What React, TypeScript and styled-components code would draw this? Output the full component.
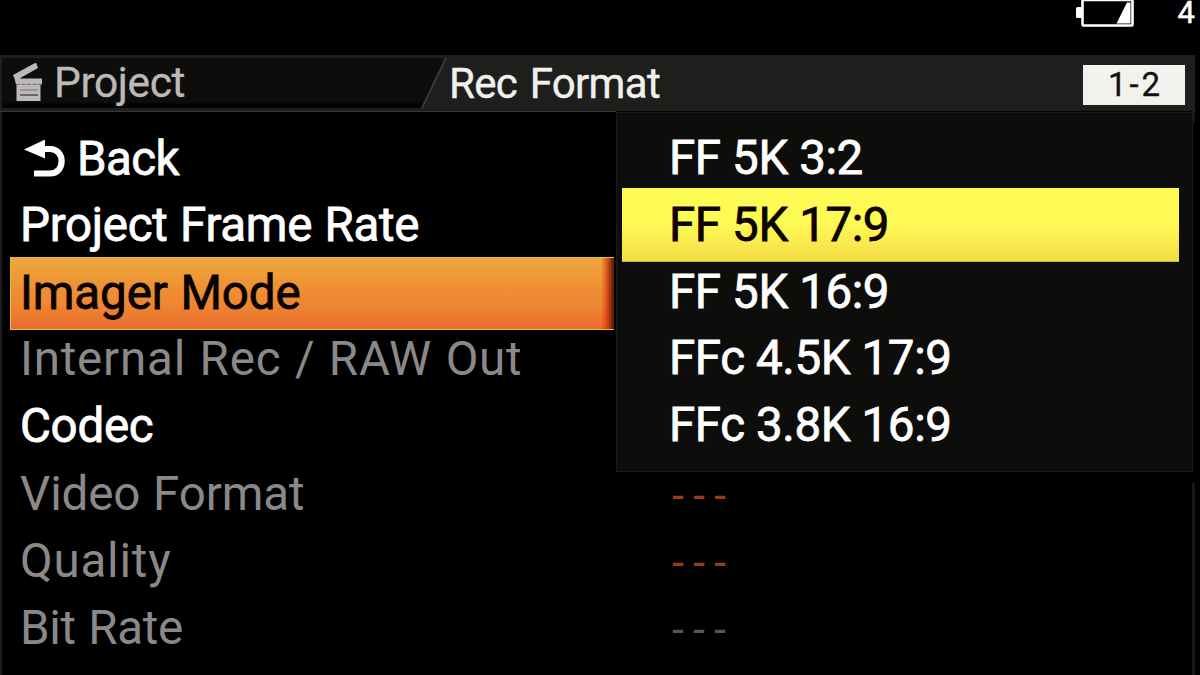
import React from 'react';
import styled, { createGlobalStyle, css } from 'styled-components';

const GlobalStyle = createGlobalStyle`
  * {
    box-sizing: border-box;
  }
  body {
    margin: 0;
    background: #000;
    overflow: hidden;
  }
`;

const Screen = styled.div`
  position: relative;
  display: flex;
  flex-direction: column;
  width: 1200px;
  height: 675px;
  overflow: hidden;
  background: #000;
  color: #fff;
  font-family: Roboto, 'Liberation Sans', sans-serif;
  white-space: nowrap;
`;

const StatusBar = styled.div`
  display: flex;
  justify-content: flex-end;
  height: 55px;
  padding-right: 5px;
`;

const BatteryIcon = styled.svg`
  width: 60px;
  height: 28px;
  margin: 0 43px 0 0;
`;

const Remaining = styled.span`
  font-size: 31px;
  line-height: 26px;
  -webkit-text-stroke: 0.5px currentColor;
`;

const Header = styled.header`
  display: flex;
  align-items: flex-start;
  width: 1195px;
  height: 57px;
  padding: 3px 10px 0 2px;
  background: #1e1e1d;
  border-bottom: 1px solid #363634;
`;

const TabEdge = styled.div`
  width: 445px;
  height: 50px;
  padding-right: 2px;
  background: #3c3c3a;
  clip-path: polygon(0 0, 100% 0, calc(100% - 24px) 100%, 0 100%);
`;

const Tab = styled.div`
  display: flex;
  align-items: center;
  height: 50px;
  padding-left: 10px;
  background: linear-gradient(#0d0d0b 44px, #030303 46px);
  clip-path: polygon(0 0, 100% 0, calc(100% - 24px) 100%, 0 100%);
  color: #bcb9b8;
`;

const TabLabel = styled.span`
  padding: 0 0 0 12px;
  font-size: 42.5px;
  line-height: 48px;
  letter-spacing: -0.4px;
  -webkit-text-stroke: 0.3px currentColor;
`;

const Title = styled.h1`
  flex: 1;
  margin: 0;
  padding-left: 2px;
  font-size: 42px;
  font-weight: 400;
  line-height: 52px;
  letter-spacing: -0.7px;
  word-spacing: 3px;
  color: #f0f0ee;
  -webkit-text-stroke: 0.4px #f0f0ee;
`;

const PageNumber = styled.div`
  width: 102px;
  height: 40px;
  margin-top: 7px;
  padding-left: 3px;
  background: #f1f1ee;
  color: #111;
  font-size: 33px;
  line-height: 39px;
  letter-spacing: 3px;
  text-align: center;
  -webkit-text-stroke: 0.3px currentColor;
`;

const Body = styled.main`
  flex: 1;
  width: 1195px;
  padding: 14px 0 0 8px;
  border-left: 2px solid #1c1c1c;
  border-right: 3px solid #181818;
`;

const Row = styled.div<{ $disabled?: boolean; $selected?: boolean }>`
  display: grid;
  grid-template-columns: 604px 1fr;
  height: 66.8px;
  color: ${(p) => (p.$disabled ? '#8b8988' : '#fff')};
  ${(p) =>
    p.$selected &&
    css`
      color: #080300;
    `}
`;

const Label = styled.div<{ $track: number; $disabled?: boolean; $selected?: boolean }>`
  display: flex;
  align-items: center;
  padding: 0 0 0 10px;
  font-size: 47.5px;
  line-height: 1;
  letter-spacing: ${(p) => p.$track}px;
  word-spacing: 1px;
  -webkit-text-stroke: ${(p) => (p.$disabled ? 0 : 0.8)}px currentColor;
  ${(p) =>
    p.$selected &&
    css`
      margin: -3px 0 -4px;
      padding-left: 9px;
      border: 1px solid #e6bd3c;
      border-right: 0;
      background: linear-gradient(90deg, transparent 590px, rgba(212, 50, 16, 0.7) 596px, #3a1006 604px),
        linear-gradient(#eda83a, #ee8c34 50%, #ee8733 65%, #ea6d2c);
    `}
`;

const BackIcon = styled.svg`
  width: 42px;
  height: 38px;
  margin: 0 11px 0 4px;
`;

const Value = styled.div<{ $color: string }>`
  padding-left: 57px;
  color: ${(p) => p.$color};
  font-family: 'Liberation Sans', Arial, sans-serif;
  font-size: 42px;
  line-height: 70px;
  letter-spacing: 7px;
`;

const Popup = styled.ul`
  position: absolute;
  left: 616px;
  top: 112px;
  width: 577px;
  height: 360px;
  margin: 0;
  padding: 12px 13px 0 5px;
  list-style: none;
  background: #0d0d0b;
  border: 1px solid #1b1b19;
  box-shadow: 0 -1px 0 #050505, 2px 11px 0 #000;
`;

const Option = styled.li<{ $selected?: boolean }>`
  height: 66.8px;
  padding-left: 47px;
  font-size: 47.5px;
  line-height: 66.5px;
  letter-spacing: -0.4px;
  -webkit-text-stroke: 0.8px currentColor;
  ${(p) =>
    p.$selected &&
    css`
      height: 73.8px;
      margin: -3.5px 0;
      padding-top: 3.5px;
      background: linear-gradient(#fefb55 45%, #faed4f 70%, #f3dc48);
      border-bottom: 1px solid #c9b53a;
      color: #0c0300;
    `}
`;

const items = [
  { label: 'Back', track: -0.6, back: true },
  { label: 'Project Frame Rate', track: -0.3 },
  { label: 'Imager Mode', track: -0.1, selected: true },
  { label: 'Internal Rec / RAW Out', track: 0.8, disabled: true },
  { label: 'Codec', track: -0.3 },
  { label: 'Video Format', track: -0.1, disabled: true, value: '---', color: '#993b1a' },
  { label: 'Quality', track: 0.8, disabled: true, value: '---', color: '#993b1a' },
  { label: 'Bit Rate', track: -0.3, disabled: true, value: '---', color: '#555' },
];

const modes = ['FF 5K 3:2', 'FF 5K 17:9', 'FF 5K 16:9', 'FFc 4.5K 17:9', 'FFc 3.8K 16:9'];

function App() {
  return (
    <Screen>
      <GlobalStyle />
      <StatusBar>
        <BatteryIcon viewBox="0 0 60 28">
          <path d="M8 7H2.5Q1 7 1 8.5V16.5Q1 18 2.5 18H8Z" fill="#fff" />
          <rect x="7.5" y="0" width="50" height="25.5" rx="1" fill="none" stroke="#fff" strokeWidth="2.6" />
          <path d="M41.5 23.5L52 2.5H55.5V23.5Z" fill="#fff" />
        </BatteryIcon>
        <Remaining>4</Remaining>
      </StatusBar>

      <Header>
        <TabEdge>
          <Tab>
            <svg width="30" height="40" viewBox="0 0 30 40">
              <path d="M1 12L24 -0.5L26 5L7.5 15.5H30V21.5H4L2.5 15.5Z" fill="#bcb9b8" />
              <path d="M4.5 21H28.5V38H4.5Z" fill="#bcb9b8" />
              <path d="M4 21.3H29" stroke="#6b6967" strokeWidth="1" strokeDasharray="4 1.5" />
              <path d="M8 27H26" stroke="#8c8a88" strokeWidth="1.3" />
              <path d="M8 32H26" stroke="#504e4c" strokeWidth="1.3" />
            </svg>
            <TabLabel>Project</TabLabel>
          </Tab>
        </TabEdge>
        <Title>Rec Format</Title>
        <PageNumber>1-2</PageNumber>
      </Header>

      <Body>
        {items.map((item) => (
          <Row key={item.label} $disabled={item.disabled} $selected={item.selected}>
            <Label $track={item.track} $disabled={item.disabled} $selected={item.selected}>
              {item.back && (
                <BackIcon viewBox="0 0 42 38">
                  <path d="M0 9.5L21 -0.5V18.5Z" fill="#fff" />
                  <path d="M20 9H26C41.5 9 41.5 33.5 26 33.5H10" fill="none" stroke="#fff" strokeWidth="6.2" />
                </BackIcon>
              )}
              {item.label}
            </Label>
            {item.value && <Value $color={item.color}>{item.value}</Value>}
          </Row>
        ))}
      </Body>

      <Popup>
        {modes.map((mode) => (
          <Option key={mode} $selected={mode === 'FF 5K 17:9'}>
            {mode}
          </Option>
        ))}
      </Popup>
    </Screen>
  );
}

export default App;
